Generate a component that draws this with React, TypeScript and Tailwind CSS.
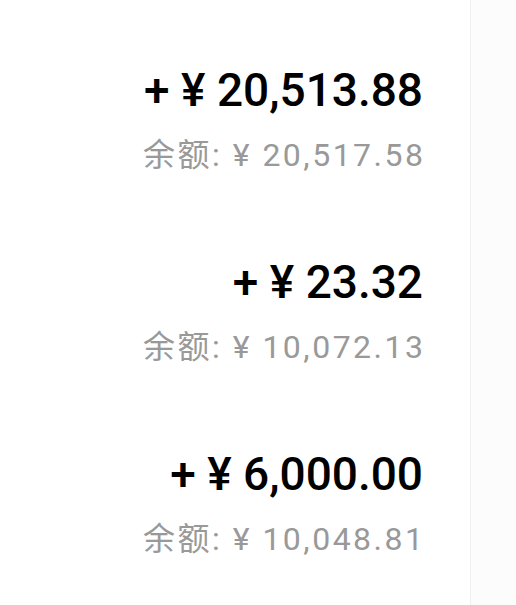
import React from 'react';

const rows = [
  { amount: '+ ¥ 20,513.88', balance: '¥ 20,517.58' },
  { amount: '+ ¥ 23.32', balance: '¥ 10,072.13' },
  { amount: '+ ¥ 6,000.00', balance: '¥ 10,048.81' },
];

export default function App() {
  return (
    <div className="flex h-[605px] w-[516px] bg-white font-['Roboto','Noto_Sans_CJK_SC',sans-serif]">
      {/* amount column */}
      <div className="flex w-[470px] flex-col items-end gap-[85px] pr-[47px] pt-[66px]">
        {rows.map((r) => (
          <div key={r.amount} className="flex flex-col items-end gap-[23px]">
            <div className="text-[46px] font-medium leading-[48px] text-black">{r.amount}</div>
            <div className="mr-[-2.5px] text-[32px] leading-[36px] tracking-[2.5px] text-[#999999]">
              余额: {r.balance}
            </div>
          </div>
        ))}
      </div>
      <div className="flex-1 border-l border-[#f0f0f0] bg-[#fcfcfc]" />
    </div>
  );
}
